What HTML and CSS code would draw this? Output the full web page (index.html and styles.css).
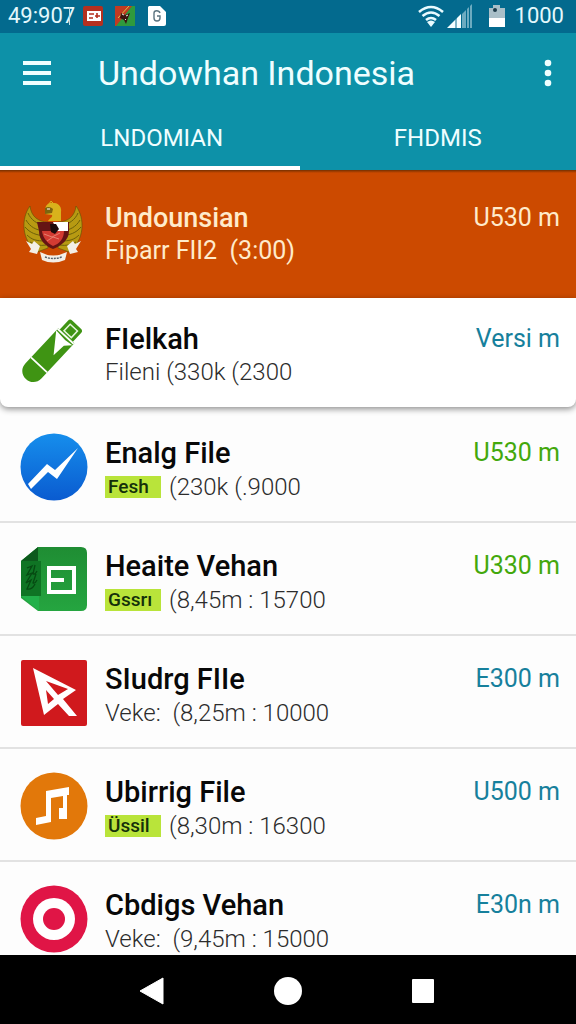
FILE: index.html
```html
<!DOCTYPE html>
<html lang="id">
<head>
    <meta charset="UTF-8">
    <meta name="viewport" content="width=device-width, initial-scale=1.0">
    <title>Undowhan Indonesia</title>
    <link rel="stylesheet" href="styles.css">
</head>
<body>
    <div class="status-bar">
        <span class="clock">49:907</span>
        <span class="clock-mark"></span>
        <div class="notifications">
            <svg width="20" height="22" viewBox="0 0 20 22">
                <rect y="1" width="20" height="20" rx="2" fill="#b5301f"/>
                <path d="M4 6h14v10H4z" fill="#fff"/>
                <path d="M6 9h5M6 13h4M12 11h5M14 8v5" stroke="#b5301f" stroke-width="1.600"/>
            </svg>
            <svg width="20" height="22" viewBox="0 0 20 22">
                <path d="M0 1h20v20H0z" fill="#2f9a3c"/>
                <path d="M0 1h17L1 21H0z" fill="#c23a22"/>
                <path d="M14 1 3 13" stroke="#d9c14a" stroke-width="1"/>
                <path d="M6 8l4 2 5-2-2 5-2 6-2-4-4-2z" fill="#3a1410"/>
                <path d="M7 9l2 1M11 11l2-1M10 14l1 1" stroke="#eee"/>
            </svg>
            <svg width="20" height="22" viewBox="0 0 20 22">
                <path d="M2 1h11l6 6v12a2 2 0 0 1-2 2H2a1 1 0 0 1-1-1V2z" fill="#fff"/>
                <path d="M13 8c-1-3-6-3-6 0v5c0 4 6 4 6 0v-2h-3" fill="none" stroke="#5c7480" stroke-width="1.400"/>
            </svg>
        </div>
        <div class="system">
            <svg width="26" height="24" viewBox="0 0 26 24">
                <path d="M1 8q12-10 24 0M4.500 12q8.500-7 17 0M8 16q5-4 10 0" fill="none" stroke="#e9fbff" stroke-width="2.600"/>
                <path d="M9 18q4-3 8 0l-4 5z" fill="#e9fbff"/>
            </svg>
            <svg width="26" height="24" viewBox="0 0 26 24">
                <path d="M0 24 9 15v9z" fill="#f4ffff"/>
                <path d="M9 15l5-5v14H9z" fill="#f4ffff"/>
                <path d="M15 10l4-4v18h-4zM20 5l2-2v21h-2zM23 2l2-2v24h-2z" fill="#6cabc0"/>
                <path d="M9 14v10" stroke="#0a6c90"/>
            </svg>
            <svg class="battery" width="18" height="24" viewBox="0 0 18 24">
                <path d="M1 4h4V1h7v3h5v19H1z" fill="#a9bfc8"/>
                <path d="M1 14h16v9H1z" fill="#fff"/>
                <circle cx="7" cy="6" r="2" fill="#1c3a48"/>
            </svg>
            <span class="level">1000</span>
        </div>
    </div>

    <header class="app-header">
        <div class="app-bar">
            <button class="icon-btn" aria-label="Menu">
                <svg width="28" height="26" viewBox="0 0 28 26">
                    <path d="M0 3h28M0 13h28M0 23h28" stroke="#f0ffff" stroke-width="4"/>
                </svg>
            </button>
            <h1>Undowhan Indonesia</h1>
            <button class="icon-btn" aria-label="Opsi lainnya">
                <svg width="8" height="28" viewBox="0 0 8 28">
                    <g fill="#f0ffff"><circle cx="4" cy="4" r="3.300"/><circle cx="4" cy="14" r="3.300"/><circle cx="4" cy="24" r="3.300"/></g>
                </svg>
            </button>
        </div>
        <nav class="tabs">
            <button class="tab active">LNDOMIAN</button>
            <button class="tab">FHDMIS</button>
        </nav>
    </header>

    <main class="list">
        <article class="row featured">
            <svg class="icon" viewBox="0 0 68 68">
                <g stroke="#5e5307" stroke-width=".6">
                    <path d="M10 8C1 20 1 42 17 54l11-4V24C18 24 11 18 10 8z" fill="#b79a12"/>
                    <path d="M56 8c9 12 9 34-7 46l-11-4V24c10 0 17-6 18-16z" fill="#b79a12"/>
                </g>
                <path d="M8 15c3 7 9 11 17 13M6 22c4 7 10 10 18 11M5 29c5 6 11 8 20 9M7 37c5 5 10 6 18 6M10 44c5 3 10 4 16 3M58 15c-3 7-9 11-17 13M60 22c-4 7-10 10-18 11M61 29c-5 6-11 8-20 9M59 37c-5 5-10 6-18 6M56 44c-5 3-10 4-16 3" fill="none" stroke="#6d6009" stroke-width="1"/>
                <path d="M25 13c0-7 5-9 8-8 6-1 9 5 8 9v9H28c2-3 5-4 4-6l-7-1z" fill="#d8b21c"/>
                <path d="M25 10c3-2 6-1 8 1l-1 4-7 1z" fill="#7d6410"/>
                <path d="M27 11h3" stroke="#fff" stroke-width="1"/>
                <path d="M29 6l2-3 2 2" fill="none" stroke="#d8b21c" stroke-width="1"/>
                <path d="M17 24h32v9c0 9-8 15-16 18-8-3-14-9-14-18z" fill="#651414"/>
                <path d="M33 24h15v9H37z" fill="#fff"/>
                <path d="M22 33h22c0 8-5 13-11 15-6-3-10-8-11-15z" fill="#d33b32"/>
                <path d="M30 26h6l3 5-4 5-4-2z" fill="#1d0a0a"/>
                <path d="M24 36l8 3 8-4M27 43l6-4 6 2" fill="none" stroke="#e88070" stroke-width="1"/>
                <path d="M6 43l6 3 2-3 6 5-3 8-8-2 2-3zM61 43l-6 3-2-3-6 5 3 8 8-2-2-3z" fill="#f3efe6"/>
                <path d="M20 54q13 7 27 0l-2 8q-12 5-23 0z" fill="#f3efe6"/>
                <path d="M25 59q8 3 17 0" fill="none" stroke="#55606a" stroke-width="1.500" stroke-dasharray="2 1"/>
            </svg>
            <div class="info">
                <h2>Undounsian</h2>
                <p class="meta">Fiparr FII2&nbsp; (3:00)</p>
            </div>
            <span class="size">U530 m</span>
        </article>

        <article class="row card">
            <svg class="icon" viewBox="0 0 68 68">
                <g transform="translate(32 32) rotate(-47)">
                    <path d="M-27-11h48v22h-48c-15 0-15-22 0-22z" fill="#3f9413"/>
                    <path d="M21-9h12q3 0 3 3V6q0 3-3 3H21z" fill="#3f9413"/>
                    <path d="M-19-11v22M20-11v22" stroke="#fff" stroke-width="1.800"/>
                    <path d="M23-5h9V5h-9z" fill="none" stroke="#e6f5dc" stroke-width="1.500"/>
                    <path d="M18-11-2 4l14 1 6 6-1-9z" fill="#fff"/>
                </g>
            </svg>
            <div class="info">
                <h2>FIelkah</h2>
                <p class="meta">Fileni&nbsp;(330k (2300</p>
            </div>
            <span class="size">Versi m</span>
        </article>

        <article class="row">
            <svg class="icon" viewBox="0 0 68 68">
                <defs>
                    <linearGradient id="blue" x1="0" y1="0" x2="0" y2="1">
                        <stop offset="0" stop-color="#168eec"/>
                        <stop offset="1" stop-color="#0a5bd0"/>
                    </linearGradient>
                </defs>
                <circle cx="34" cy="34" r="33.500" fill="url(#blue)"/>
                <path d="M8 51 27 31l8 6 23-22-21 31-9-7-17 17z" fill="#fff"/>
            </svg>
            <div class="info">
                <h2>Enalg File</h2>
                <p class="meta"><span class="badge">Fesh</span>(230k (.9000</p>
            </div>
            <span class="size green">U530 m</span>
        </article>

        <article class="row">
            <svg class="icon" viewBox="0 0 68 68">
                <defs>
                    <linearGradient id="green" x1="0" y1="0" x2="0" y2="1">
                        <stop offset="0" stop-color="#1f8d33"/>
                        <stop offset="1" stop-color="#25a540"/>
                    </linearGradient>
                </defs>
                <path d="M18 1h43q6 0 6 6v52q0 6-6 6H18L1 52V15z" fill="url(#green)"/>
                <path d="M18 1v14H1z" fill="#0d5a1d"/>
                <path d="M1 15h20v35H1z" fill="#0f7424"/>
                <path d="M1 50h18v15z" fill="#22b04a"/>
                <path d="M7 22l5-2-5 9 5-2-6 10 5-3-4 9q5 1 8-5M15 19l-2 9q2 1 4-3M16 28l-3 9q2 1 4-3" fill="none" stroke="#064a12" stroke-width="1.300"/>
                <path d="M29 22h25v24H29z" fill="none" stroke="#fff" stroke-width="4"/>
                <path d="M30 34h14" stroke="#fff" stroke-width="4"/>
            </svg>
            <div class="info">
                <h2>Heaite Vehan</h2>
                <p class="meta"><span class="badge">Gssrı</span>(8,45m : 15700</p>
            </div>
            <span class="size green">U330 m</span>
        </article>

        <article class="row">
            <svg class="icon" viewBox="0 0 68 68">
                <rect x="1" y="1" width="66" height="66" rx="2" fill="#d0191d"/>
                <path d="M13 9 56 31 43 40 57 57H49L38 45 24 56zM26 22 38 36 48 30zM26 31 28 45 34 40z" fill="#fff" fill-rule="evenodd"/>
            </svg>
            <div class="info">
                <h2>SIudrg FIIe</h2>
                <p class="meta">Veke:&nbsp; (8,25m : 10000</p>
            </div>
            <span class="size">E300 m</span>
        </article>

        <article class="row">
            <svg class="icon" viewBox="0 0 68 68">
                <circle cx="34" cy="34" r="33.500" fill="#e2780a"/>
                <path d="M26 19 49 15v8h-2v24h-8V36h4V24l-12 2v24l-15 3v-7l10-2z" fill="#fff"/>
            </svg>
            <div class="info">
                <h2>Ubirrig File</h2>
                <p class="meta"><span class="badge">Üssil</span>(8,30m : 16300</p>
            </div>
            <span class="size">U500 m</span>
        </article>

        <article class="row">
            <svg class="icon" viewBox="0 0 68 68">
                <circle cx="34" cy="34" r="33.500" fill="#e01546"/>
                <circle cx="34" cy="34" r="21" fill="#fff"/>
                <circle cx="34" cy="34" r="11" fill="#e01546"/>
            </svg>
            <div class="info">
                <h2>Cbdigs Vehan</h2>
                <p class="meta">Veke:&nbsp; (9,45m : 15000</p>
            </div>
            <span class="size">E30n m</span>
        </article>
    </main>

    <footer class="nav-bar">
        <button aria-label="Kembali">
            <svg width="28" height="28" viewBox="0 0 28 28"><path d="M25 1v26L2 14z" fill="#fff" stroke="#fff" stroke-linejoin="round"/></svg>
        </button>
        <button aria-label="Beranda">
            <svg width="28" height="28" viewBox="0 0 28 28"><circle cx="14" cy="14" r="14" fill="#fff"/></svg>
        </button>
        <button aria-label="Terbaru">
            <svg width="28" height="28" viewBox="0 0 28 28"><rect x="2" y="2" width="22" height="24" rx="1" fill="#fff"/></svg>
        </button>
    </footer>
</body>
</html>
```
FILE: styles.css
```css
* {
    box-sizing: border-box;
    margin: 0;
    padding: 0;
    font-family: Roboto, "Liberation Sans", sans-serif;
}

body {
    display: flex;
    flex-direction: column;
    height: 100vh;
    overflow: hidden;
    background-color: #fdfdfd;
}

button {
    border: none;
    background: none;
    color: inherit;
}

svg {
    display: block;
    flex-shrink: 0;
}

/* status bar */
.status-bar {
    display: flex;
    align-items: center;
    flex-shrink: 0;
    height: 33px;
    padding: 0 12px 2px 8px;
    background-color: #036a8e;
    color: #e4f8fc;
    font-size: 22px;
}

.clock {
    width: 61px;
}

.clock-mark {
    width: 1px;
    height: 18px;
    background-color: #b8dde8;
}

.notifications {
    display: flex;
    gap: 12px;
    margin-left: 13px;
}

.system {
    display: flex;
    align-items: center;
    gap: 3px;
    margin-left: auto;
}

.battery {
    margin: 0 6px 0 12px;
}

/* header */
.app-header {
    flex-shrink: 0;
    background-color: #0d91a8;
    color: #effeff;
}

.app-bar {
    display: flex;
    align-items: center;
    height: 77px;
    padding: 2px 24px 0 23px;
}

.app-bar h1 {
    flex: 1;
    margin-left: 47px;
    font-size: 34px;
    font-weight: 400;
}

.tabs {
    display: grid;
    grid-template-columns: 52% 48%;
}

.tab {
    height: 60px;
    border-bottom: 4px solid transparent;
    font-size: 24px;
}

.tab.active {
    padding-left: 24px;
    border-bottom-color: #fff;
}

/* list */
.list {
    flex: 1;
    min-height: 0;
    overflow: hidden;
}

.row {
    display: flex;
    align-items: flex-start;
    height: 113px;
    padding: 23px 16px 0 20px;
    border-bottom: 2px solid #e2e2e2;
}

.icon {
    width: 68px;
    height: 68px;
    margin-right: 17px;
}

.info {
    flex: 1;
    padding-top: 3px;
}

.info h2 {
    color: #080808;
    font-size: 29px;
    font-weight: 500;
    line-height: 34px;
}

.meta {
    display: flex;
    align-items: center;
    color: #2c2c2c;
    font-size: 24px;
    font-weight: 300;
    line-height: 34px;
}

.badge {
    width: 56px;
    height: 22px;
    margin-right: 8px;
    padding-left: 3px;
    background-color: #b9e43a;
    color: #14300a;
    font-size: 19px;
    font-weight: 500;
    line-height: 22px;
}

.size {
    padding-top: 3px;
    color: #16809c;
    font-size: 25px;
    line-height: 34px;
}

.size.green {
    color: #43a80c;
}

.featured {
    height: 128px;
    padding-top: 28px;
    border-bottom: none;
    background-color: #cc4a00;
    background-image: linear-gradient(rgba(60, 30, 0, 0.6), transparent 3px);
}

.featured h2 {
    font-size: 27px;
}

.featured .meta {
    font-size: 25px;
    font-weight: 400;
    line-height: 32px;
}

.featured h2,
.featured .meta,
.featured .size {
    color: #ffebcb;
}

.card {
    height: 109px;
    margin-bottom: 3px;
    padding-top: 21px;
    border-bottom: none;
    border-radius: 0 0 8px 8px;
    background-color: #fff;
    box-shadow: 0 2px 6px rgba(0, 0, 0, 0.45);
}

.card .meta {
    line-height: 32px;
}

/* navigation */
.nav-bar {
    display: flex;
    justify-content: center;
    align-items: center;
    flex-shrink: 0;
    gap: 108px;
    height: 69px;
    padding-top: 3px;
    background-color: #000;
}
```
